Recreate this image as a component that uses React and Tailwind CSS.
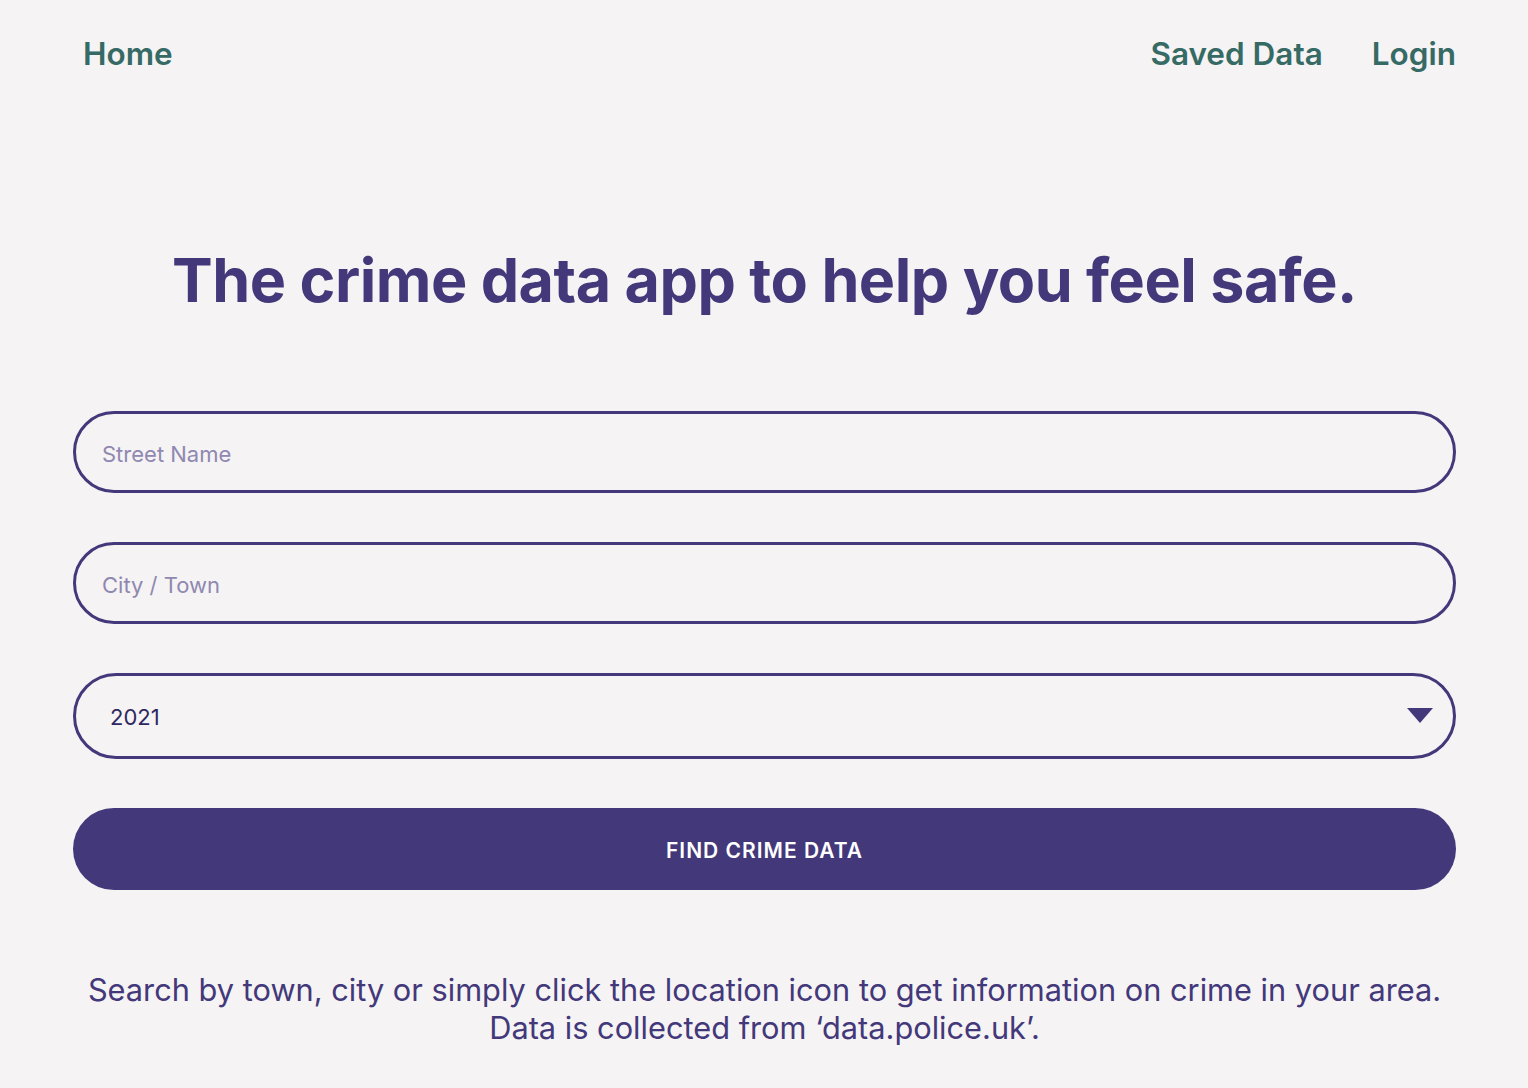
import React, { useState } from "react";

const App = () => {
  const [street, setStreet] = useState("");
  const [city, setCity] = useState("");
  const [year, setYear] = useState("2021");

  return (
    <div
      className="min-h-screen bg-[#f5f3f4] text-[#43387a]"
      style={{ fontFamily: "Inter, 'Noto Sans', sans-serif" }}
    >
      {/* Nav */}
      <nav className="flex items-center justify-between px-[83px] pr-[72px] pt-[34px]">
        <a href="#" className="text-[31.5px] font-semibold leading-[40px] text-[#366a64]">
          Home
        </a>
        <div className="flex items-center gap-[49px]">
          <a href="#" className="text-[31.5px] font-semibold leading-[40px] text-[#366a64]">
            Saved Data
          </a>
          <a href="#" className="text-[31.5px] font-semibold leading-[40px] text-[#366a64]">
            Login
          </a>
        </div>
      </nav>

      <main className="px-[73px] pr-[72px]">
        <h1 className="mt-[166px] text-center text-[61px] font-bold leading-[80px] tracking-[-0.5px]">
          The crime data app to help you feel safe.
        </h1>

        <form
          className="mt-[91px] flex flex-col gap-[49px]"
          onSubmit={(e) => e.preventDefault()}
        >
          <input
            type="text"
            value={street}
            onChange={(e) => setStreet(e.target.value)}
            placeholder="Street Name"
            className="h-[82px] w-full rounded-full border-[3px] border-[#43387a] bg-transparent px-[26px] pt-[3px] text-[22px] text-[#43387a] outline-none placeholder:text-[#8f88b0]"
          />
          <input
            type="text"
            value={city}
            onChange={(e) => setCity(e.target.value)}
            placeholder="City / Town"
            className="h-[82px] w-full rounded-full border-[3px] border-[#43387a] bg-transparent px-[26px] pt-[3px] text-[22px] text-[#43387a] outline-none placeholder:text-[#8f88b0]"
          />
          <div className="relative">
            <select
              value={year}
              onChange={(e) => setYear(e.target.value)}
              className="h-[86px] w-full appearance-none rounded-full border-[3px] border-[#43387a] bg-transparent px-[34px] pt-[3px] text-[22px] text-[#2f2860] outline-none"
            >
              <option>2021</option>
              <option>2020</option>
              <option>2019</option>
            </select>
            <svg
              className="pointer-events-none absolute right-[23px] top-[35px]"
              width="26"
              height="16"
              viewBox="0 0 26 16"
            >
              <polygon points="0,0 26,0 13,15" fill="#43387a" />
            </svg>
          </div>
          <button
            type="submit"
            className="h-[82px] w-full rounded-full bg-[#43387a] pt-[3px] text-[21px] font-semibold uppercase tracking-[1px] text-white"
          >
            Find crime data
          </button>
        </form>

        <p className="mt-[81px] text-center text-[30.75px] leading-[38px]">
          Search by town, city or simply click the location icon to get information on crime in your area.
          <br />
          Data is collected from ‘data.police.uk’.
        </p>
      </main>
    </div>
  );
};

export default App;
